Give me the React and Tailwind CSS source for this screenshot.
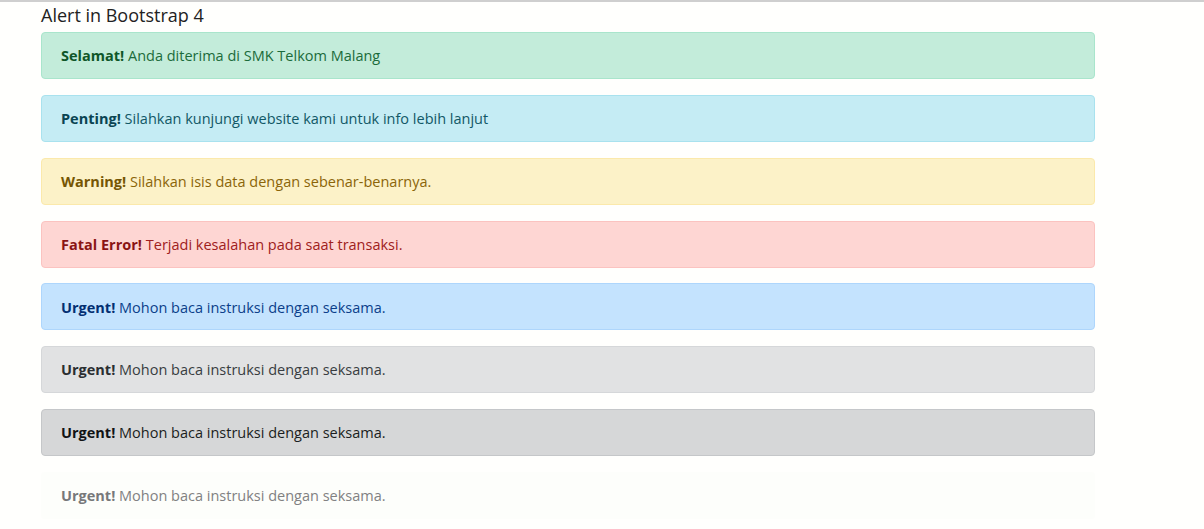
import React from 'react'

const alerts = [
  { title: 'Selamat!', text: 'Anda diterima di SMK Telkom Malang', box: 'bg-[#c3ecda] border-[#a9e5cc] text-[#1b6b3b]', strong: 'text-[#0f5628]' },
  { title: 'Penting!', text: 'Silahkan kunjungi website kami untuk info lebih lanjut', box: 'bg-[#c5ecf4] border-[#a9e2ee] text-[#125866]', strong: 'text-[#0a4452]' },
  { title: 'Warning!', text: 'Silahkan isis data dengan sebenar-benarnya.', box: 'bg-[#fcf2c8] border-[#fbe9ab] text-[#8b6508]', strong: 'text-[#755603]' },
  { title: 'Fatal Error!', text: 'Terjadi kesalahan pada saat transaksi.', box: 'bg-[#fed6d3] border-[#fbc3c0] text-[#9f2020]', strong: 'text-[#8a1414]' },
  { title: 'Urgent!', text: 'Mohon baca instruksi dengan seksama.', box: 'bg-[#c4e3fe] border-[#aed6fc] text-[#0c3f8a]', strong: 'text-[#032f72]' },
  { title: 'Urgent!', text: 'Mohon baca instruksi dengan seksama.', box: 'bg-[#e1e2e3] border-[#d5d7d9] text-[#383d41]', strong: 'text-[#2a2e31]' },
  { title: 'Urgent!', text: 'Mohon baca instruksi dengan seksama.', box: 'bg-[#d6d7d8] border-[#c5c7c9] text-[#1b1e21]', strong: 'text-[#111315]' },
  { title: 'Urgent!', text: 'Mohon baca instruksi dengan seksama.', box: 'bg-[#fdfefb] border-[#fdfefb] text-[#818182]', strong: 'text-[#77787a]' }
]

const App = () => {
  return (
    <div className="min-h-[529px] bg-[#fffffd] border-t-2 border-[#cfcfcf] font-['Open_Sans','Liberation_Sans',sans-serif]">
      <div className="w-[1054px] ml-[41px]">
        <h3 className="h-[30px] text-[18px] leading-[26px] text-[#222]">Alert in Bootstrap 4</h3>
        <div className="flex flex-col gap-[15.85px]">
          {alerts.map((a, i) => (
            <div
              key={i}
              className={`h-[47px] shrink-0 px-[19px] flex items-center border rounded-[4px] text-[14.5px] ${a.box}`}
            >
              <p className="mt-[1px]">
                <strong className={`font-bold ${a.strong}`}>{a.title}</strong> {a.text}
              </p>
            </div>
          ))}
        </div>
      </div>
    </div>
  )
}

export default App
